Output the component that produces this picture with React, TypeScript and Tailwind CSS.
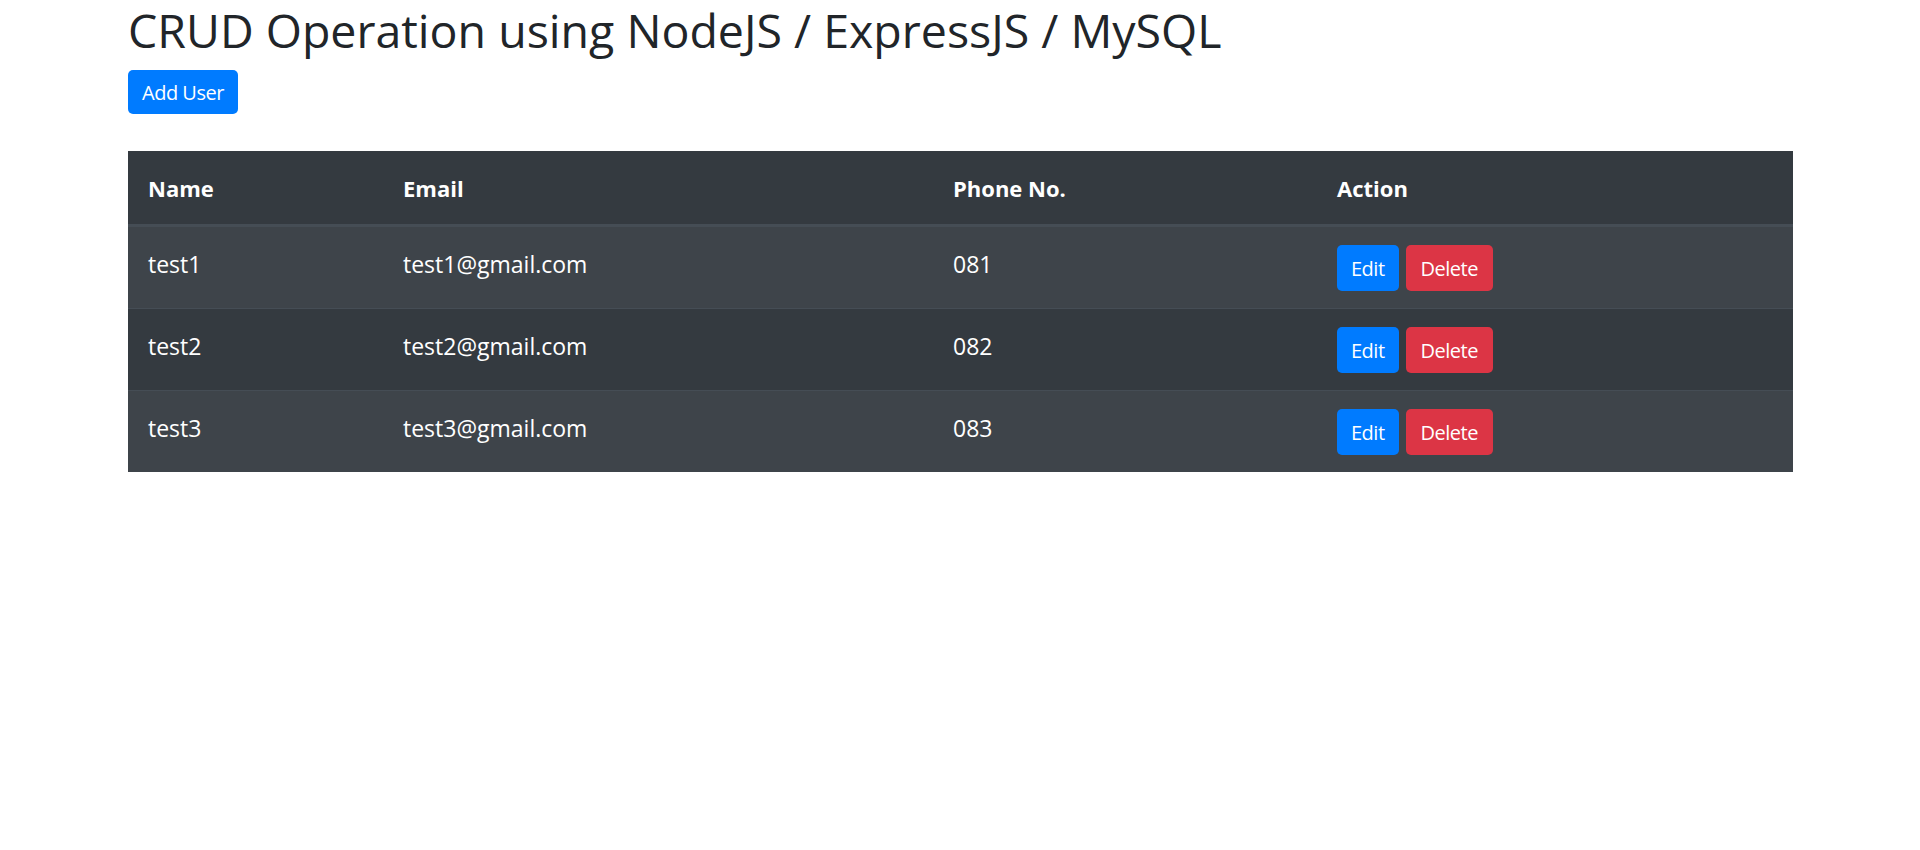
import React from "react";

const users = [
  { name: "test1", email: "test1@gmail.com", phone: "081" },
  { name: "test2", email: "test2@gmail.com", phone: "082" },
  { name: "test3", email: "test3@gmail.com", phone: "083" },
];

export default function App() {
  return (
    <div
      className="min-h-[850px] bg-white text-[#212529]"
      style={{ fontFamily: '"Open Sans", "Noto Sans", sans-serif' }}
    >
      <div className="pl-[128px] pr-[127px] pt-[3px]">
        <h1 className="text-[46.5px] leading-[54px] font-normal text-[#212529]">
          CRUD Operation using NodeJS / ExpressJS / MySQL
        </h1>
        <button className="mt-[13px] h-[44px] px-[14px] pt-[2px] rounded-[5px] bg-[#007bff] text-white text-[20px] leading-[30px] tracking-[-0.5px]">
          Add User
        </button>
        <div className="mt-[37px] w-[1665px] text-white text-[23px] leading-[30px]">
          <div className="flex h-[75px] bg-[#343a40] border-b-2 border-[#454d55] font-bold text-[22px]">
            <div className="w-[255px] pl-[20px] pt-[22px]">Name</div>
            <div className="w-[550px] pl-[20px] pt-[22px]">Email</div>
            <div className="w-[384px] pl-[20px] pt-[22px]">Phone No.</div>
            <div className="flex-1 pl-[20px] pt-[22px]">Action</div>
          </div>
          {users.map((u, i) => (
            <div
              key={u.name}
              className={
                "flex h-[82px] border-t border-[#454d55] " +
                (i % 2 === 0 ? "bg-[#3e444a]" : "bg-[#343a40]")
              }
            >
              <div className="w-[255px] pl-[20px] pt-[22px]">{u.name}</div>
              <div className="w-[550px] pl-[20px] pt-[22px]">{u.email}</div>
              <div className="w-[384px] pl-[20px] pt-[22px]">{u.phone}</div>
              <div className="flex-1 pl-[20px] pt-[18px] flex items-start gap-[7px]">
                <button className="h-[46px] px-[14px] pt-[2px] rounded-[5px] bg-[#007bff] text-white text-[20px] leading-[30px] tracking-[-0.5px]">
                  Edit
                </button>
                <button className="h-[46px] px-[15px] pt-[2px] rounded-[5px] bg-[#dc3545] text-white text-[20px] leading-[30px] tracking-[-0.5px]">
                  Delete
                </button>
              </div>
            </div>
          ))}
        </div>
      </div>
    </div>
  );
}
